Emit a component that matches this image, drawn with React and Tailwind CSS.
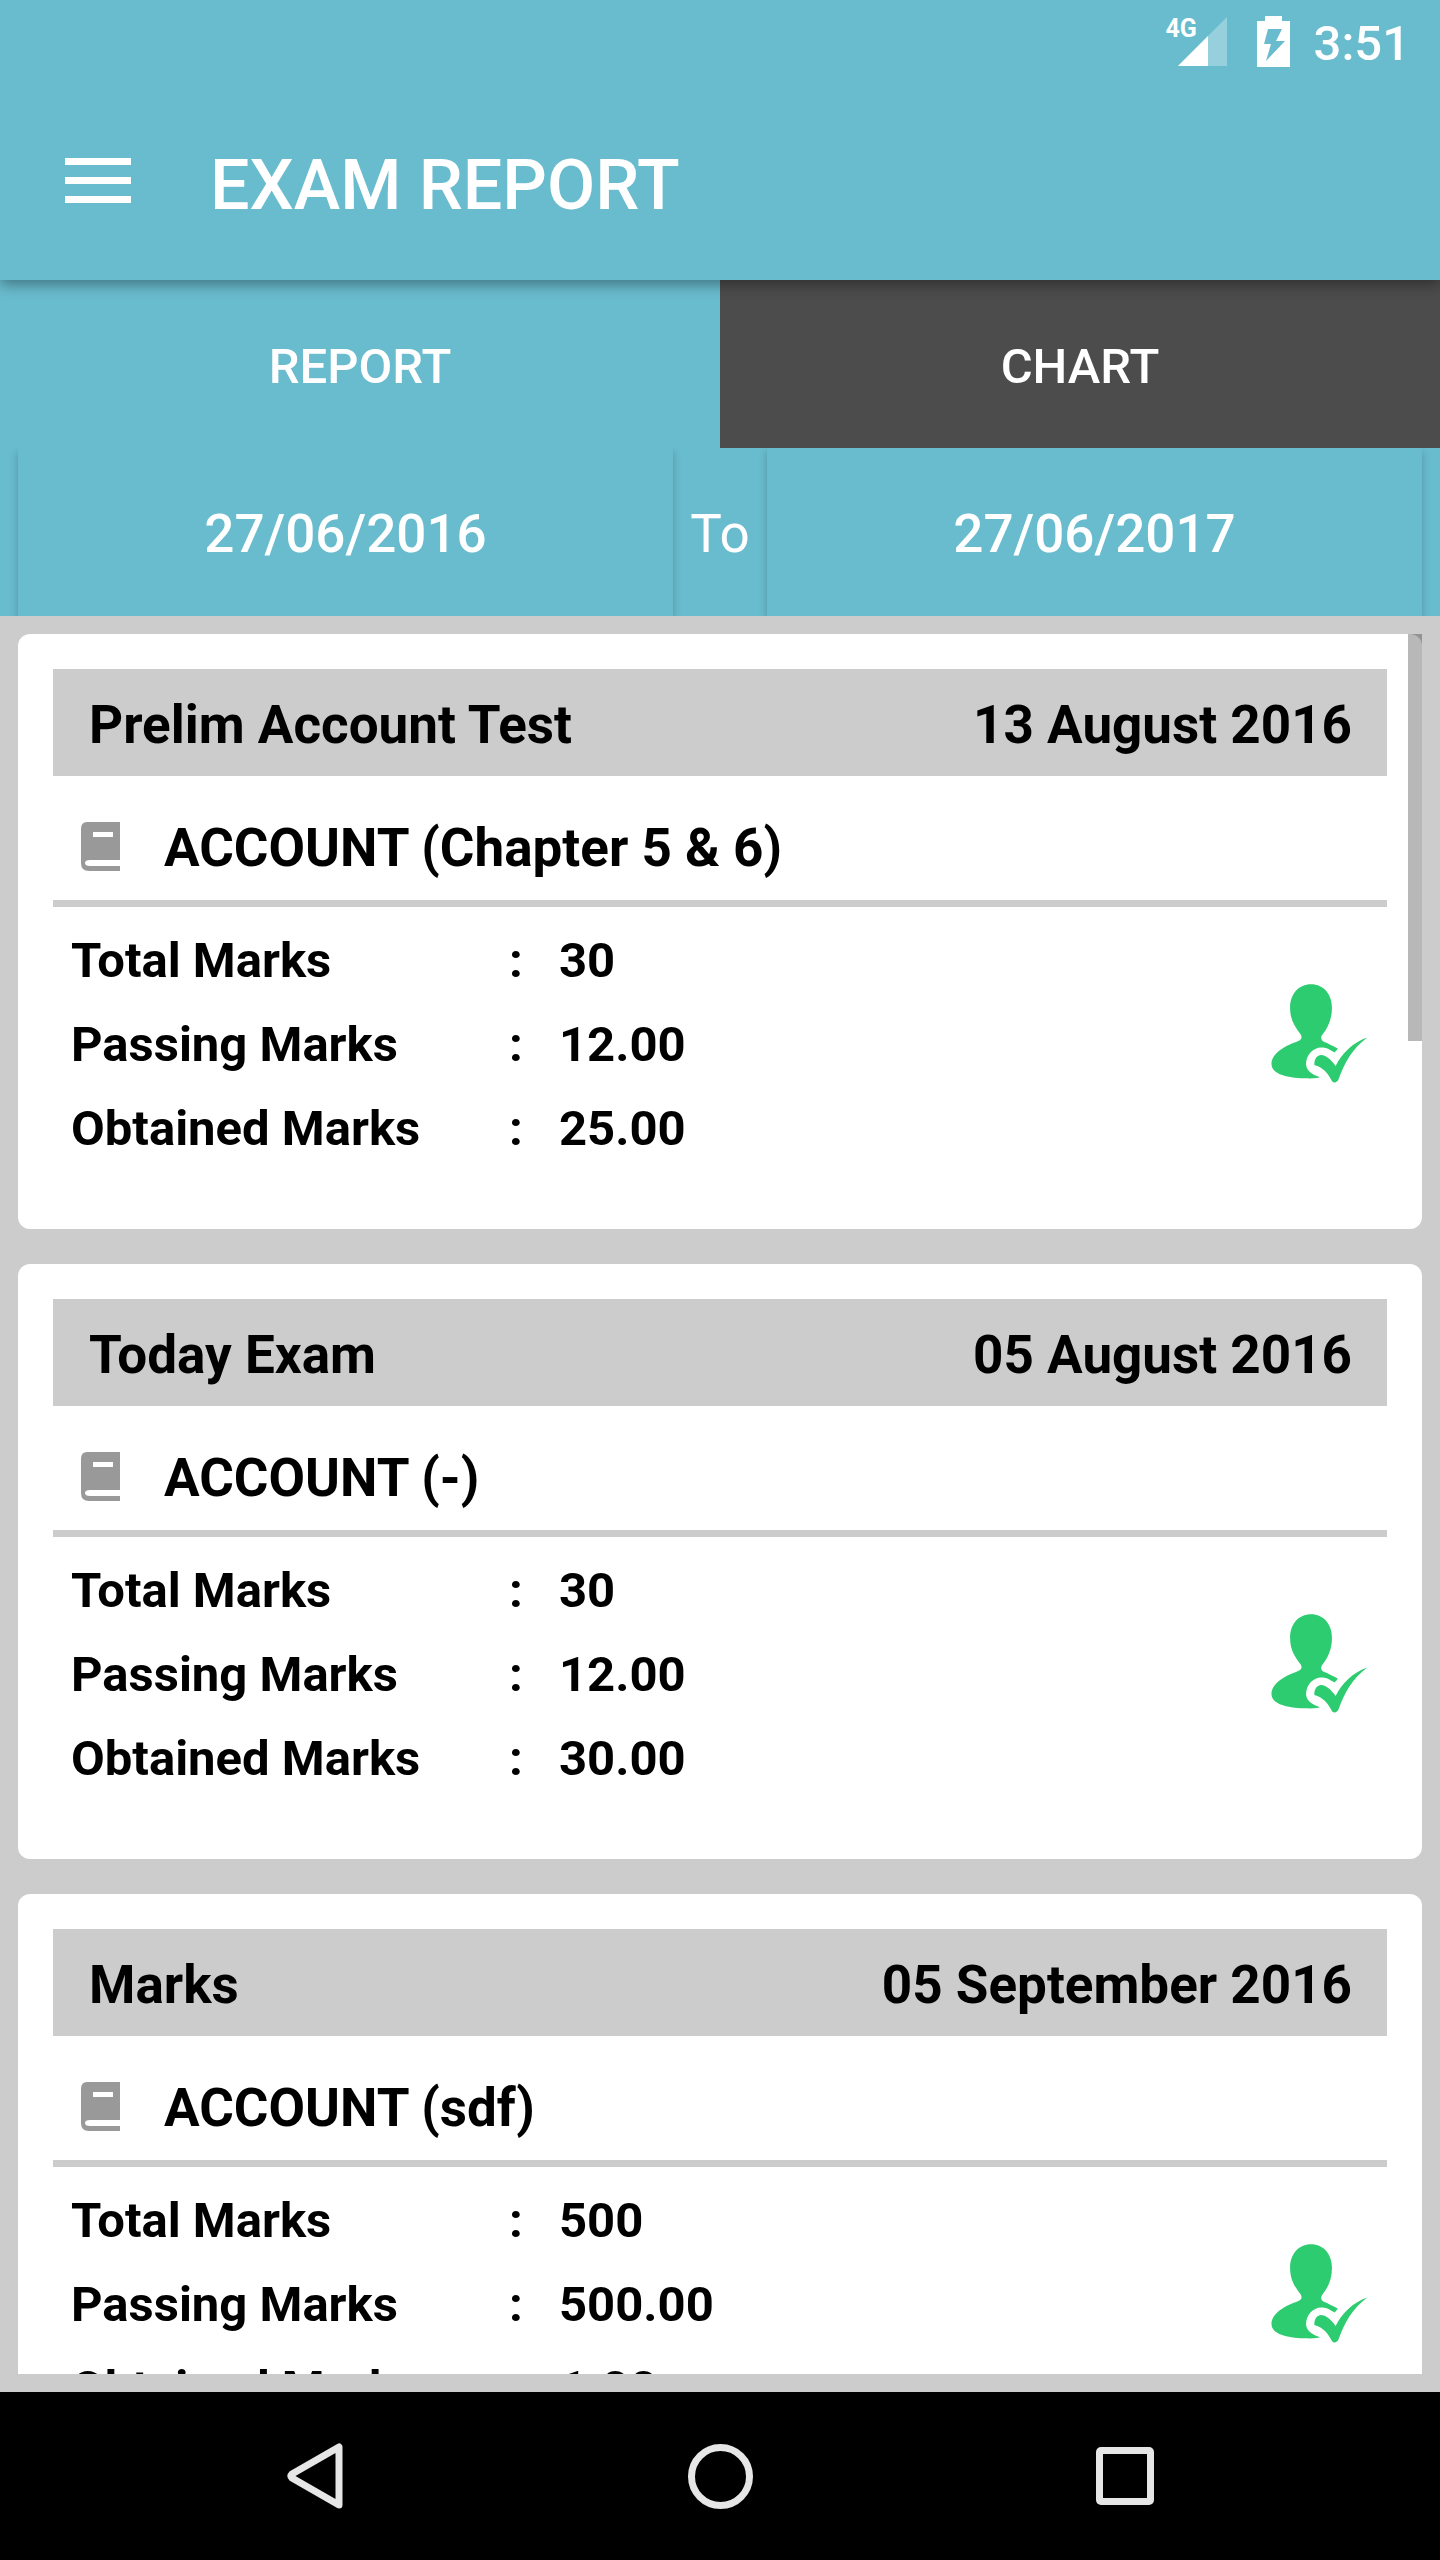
const exams = [
  { title: "Prelim Account Test", date: "13 August 2016", subject: "ACCOUNT (Chapter 5 & 6)", total: "30", passing: "12.00", obtained: "25.00" },
  { title: "Today Exam", date: "05 August 2016", subject: "ACCOUNT (-)", total: "30", passing: "12.00", obtained: "30.00" },
  { title: "Marks", date: "05 September 2016", subject: "ACCOUNT (sdf)", total: "500", passing: "500.00", obtained: "1.00" },
];

function BookIcon() {
  return (
    <svg viewBox="0 0 39 49" className="h-[49px] w-[39px] shrink-0" aria-hidden="true">
      <path
        fillRule="evenodd"
        fill="#999999"
        d="M6 0H39V38H9Q4 38 4 41Q4 44 9 44H39V49H8Q0 49 0 41V7Q0 0 6 0ZM12 10V15H32V10Z"
      />
    </svg>
  );
}

function PresentIcon() {
  return (
    <svg viewBox="152 130 294 298" className="h-[99px] w-[98px] shrink-0" role="img" aria-label="Present">
      <g fill="#2ecc71">
        <path d="M272 131C309 131 335 160 335 202C335 235 323 262 307 281C300 290 302 298 309 303C323 309 340 317 353 325L343 336C325 325 316 321 303 321C277 321 257 345 257 371C257 388 272 402 299 411C290 415 272 414 250 414C200 412 153 402 153 370C153 342 188 317 225 305C239 300 248 295 241 282C222 257 209 236 209 202C209 160 235 131 272 131Z" />
        <path d="M303 344C315 344 332 357 346 377C362 342 400 304 441 291C399 323 373 364 355 417C350 428 340 429 335 422C323 399 307 380 282 374C281 356 290 345 303 344Z" />
      </g>
    </svg>
  );
}

function StatusBar() {
  return (
    <div className="flex h-[84px] items-start justify-end pr-[30px] text-white">
      <div className="relative mt-[17px] mr-[30px] h-[49px] w-[61px]">
        <svg viewBox="0 0 61 49" className="size-full" aria-hidden="true">
          <path d="M61 0V49H12Z" fill="#fff" fillOpacity="0.3" />
          <path d="M42 19V49H12Z" fill="#fff" />
        </svg>
        <span className="absolute top-0 left-0 text-[25px] leading-[24px] font-bold">4G</span>
      </div>
      <svg viewBox="0 0 33 51" className="mt-[16px] mr-[24px] h-[51px] w-[33px]" aria-hidden="true">
        <path fillRule="evenodd" fill="#fff" d="M8 0H25V5H33V51H0V5H8ZM11 13L7 28H14L9 45L28 25H19L25 13Z" />
      </svg>
      <time className="mt-[15px] text-[49px] leading-[58px] font-medium">3:51</time>
    </div>
  );
}

function ExamCard({ exam }) {
  const rows = [
    ["Total Marks", exam.total],
    ["Passing Marks", exam.passing],
    ["Obtained Marks", exam.obtained],
  ];
  return (
    <article className="shrink-0 rounded-[12px] bg-white px-[35px] pt-[35px] pb-[58px] text-black">
      <header className="flex h-[107px] items-center justify-between bg-[#cccccc] pt-[6px] pr-[35px] pl-[36px] text-[53px] font-bold">
        <h2>{exam.title}</h2>
        <span>{exam.date}</span>
      </header>
      <div className="flex h-[131px] items-start border-b-[7px] border-[#cccccc] pt-[46px] pl-[28px] text-[53px] font-bold">
        <BookIcon />
        <h3 className="pl-[44px]">{exam.subject}</h3>
      </div>
      <div className="flex items-start justify-between pt-[12px] pr-[18px] pl-[18px]">
        <dl className="text-[49px] leading-[84px] font-bold">
          {rows.map(([label, value]) => (
            <div key={label} className="flex">
              <dt className="flex w-[488px]">
                <span className="w-[438px]">{label}</span>
                <span>:</span>
              </dt>
              <dd>{value}</dd>
            </div>
          ))}
        </dl>
        <div className="pt-[65px]">
          <PresentIcon />
        </div>
      </div>
    </article>
  );
}

export default function App() {
  return (
    <div className="flex h-screen flex-col bg-[#cccccc] font-['Roboto',sans-serif] leading-none">
      <header className="relative z-10 bg-[#69bcce] shadow-[0_4px_14px_rgba(0,0,0,0.4)]">
        <StatusBar />
        <div className="flex h-[196px] items-start pl-[65px] text-white">
          <button type="button" aria-label="Open menu" className="mt-[74px] flex w-[66px] flex-col gap-3">
            <span className="h-[7px] bg-white" />
            <span className="h-[7px] bg-white" />
            <span className="h-[7px] bg-white" />
          </button>
          <h1 className="pt-[66px] pl-[79px] text-[70px] font-medium">EXAM REPORT</h1>
        </div>
      </header>

      <div role="tablist" className="grid h-[168px] shrink-0 grid-cols-2 text-[49px] font-medium text-white">
        <button type="button" role="tab" aria-selected="true" className="bg-[#69bcce] pt-1">REPORT</button>
        <button type="button" role="tab" aria-selected="false" className="bg-[#4c4c4c] pt-1">CHART</button>
      </div>

      <div className="flex h-[168px] shrink-0 overflow-hidden bg-[#69bcce] px-[18px] text-[53px] text-white">
        <button type="button" className="flex-1 bg-[#69bcce] pt-1 font-medium shadow-[0_4px_8px_rgba(0,0,0,0.22)]">27/06/2016</button>
        <span className="flex w-[94px] items-center justify-center pt-1">To</span>
        <button type="button" className="flex-1 bg-[#69bcce] pt-1 font-medium shadow-[0_4px_8px_rgba(0,0,0,0.22)]">27/06/2017</button>
      </div>

      <main className="relative m-[18px] flex min-h-0 flex-1 flex-col gap-[35px] overflow-hidden">
        {exams.map((exam) => (
          <ExamCard key={exam.title} exam={exam} />
        ))}
        <div className="absolute top-0 right-0 h-[407px] w-[14px] bg-black/28" />
      </main>

      <nav className="flex h-[168px] shrink-0 items-center justify-center bg-black">
        <button type="button" aria-label="Back" className="flex w-9/32 justify-center">
          <svg viewBox="0 0 56 66" className="h-[66px] w-[56px]" fill="none" stroke="#e6e6e6" strokeWidth="7" strokeLinejoin="round">
            <path d="M52 4V62L5 35Q3 33 5 31Z" />
          </svg>
        </button>
        <button type="button" aria-label="Home" className="flex w-9/32 justify-center">
          <span className="size-[65px] rounded-full border-[7px] border-[#e6e6e6]" />
        </button>
        <button type="button" aria-label="Recent apps" className="flex w-9/32 justify-center">
          <span className="flex size-[58px] rounded-[5px] bg-[#e6e6e6] p-[7px]">
            <span className="flex-1 bg-black" />
          </span>
        </button>
      </nav>
    </div>
  );
}
